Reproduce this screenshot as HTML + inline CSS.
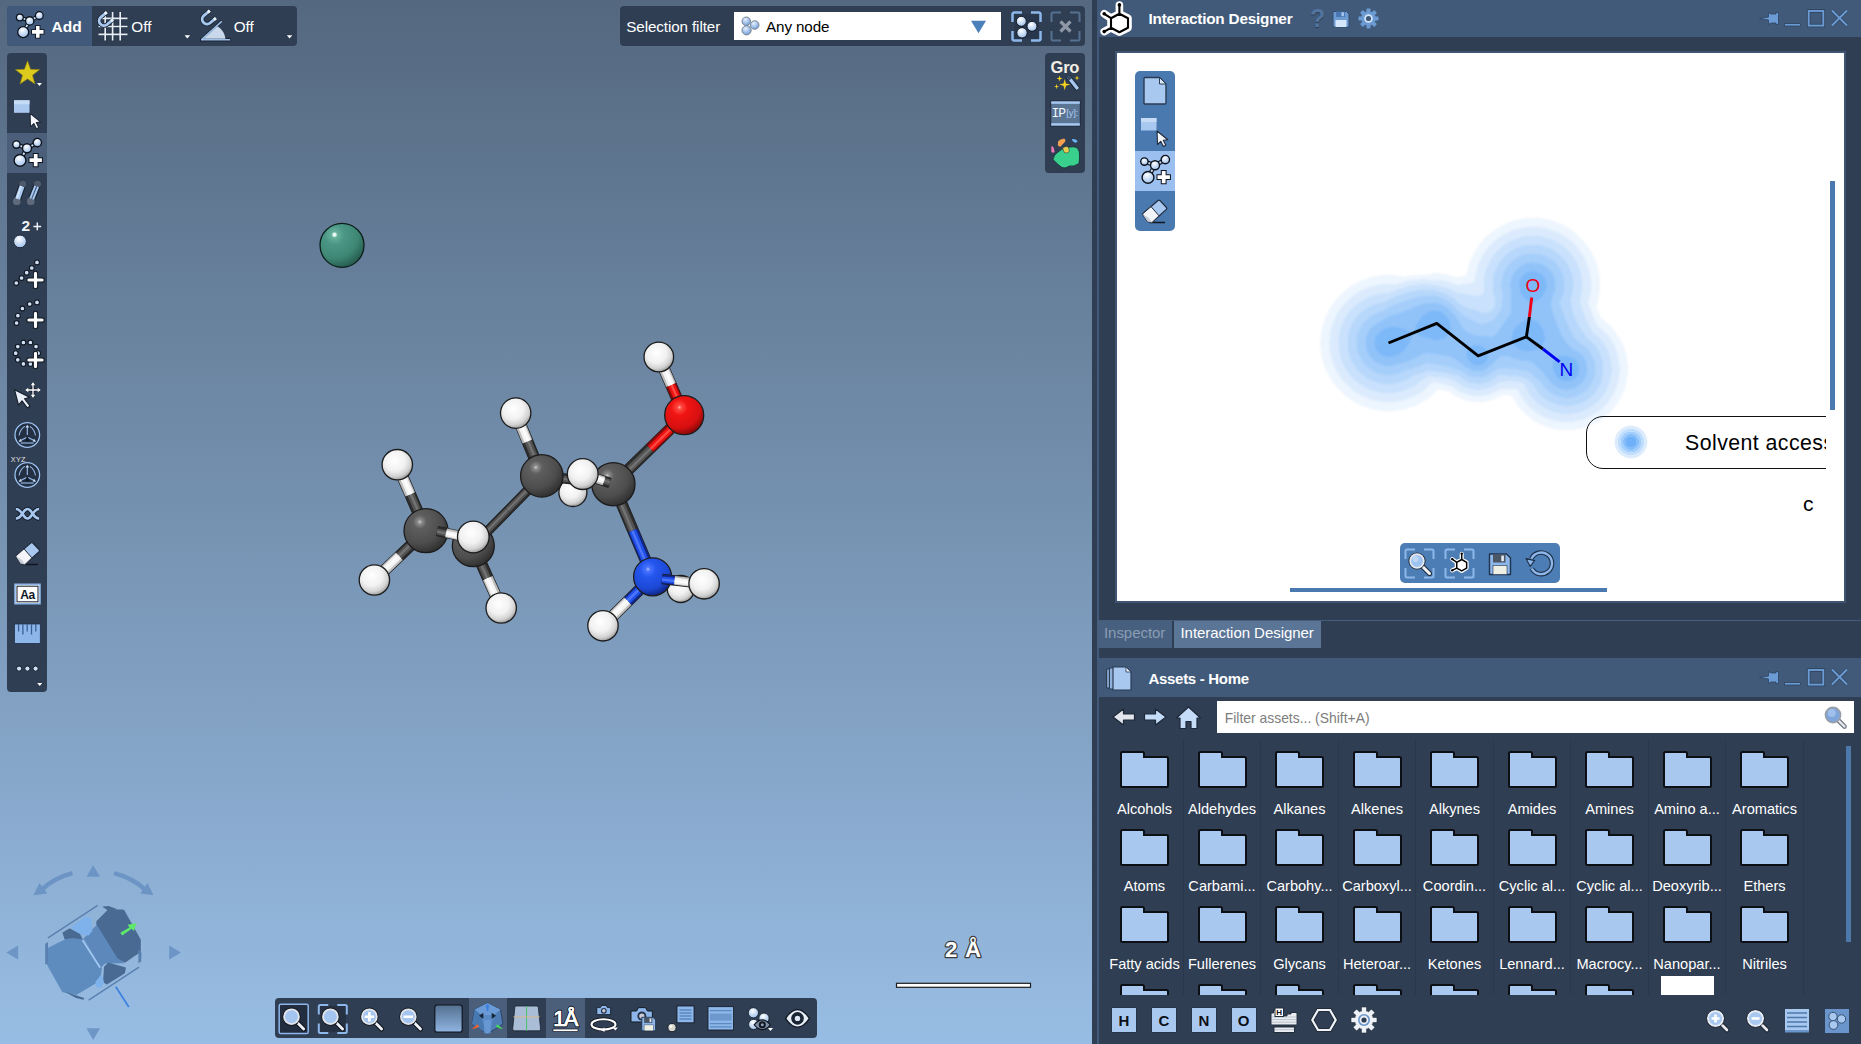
<!DOCTYPE html>
<html><head><meta charset="utf-8"><title>SAMSON</title>
<style>
*{box-sizing:border-box;margin:0;padding:0}
html,body{width:1861px;height:1044px;overflow:hidden;background:#2f3e53;font-family:"Liberation Sans",sans-serif;color:#fff}
.abs{position:absolute}
#vp{position:absolute;left:0;top:0;width:1092px;height:1044px;background:linear-gradient(180deg,#54687f 0%,#98bde4 100%);overflow:hidden}
#sep{position:absolute;left:1092px;top:0;width:6px;height:1044px;background:#2f3e53}
.bar{position:absolute;background:#2f3e53;border-radius:4px}
#rp{position:absolute;left:1098px;top:0;width:763px;height:1044px;background:#2f3e53}
.title{position:absolute;left:-1px;width:764px;height:37px;background:#415a7a}
.title .t{position:absolute;left:51px;top:9.7px;font-weight:bold;font-size:15.3px;letter-spacing:-0.2px;color:#fff;white-space:nowrap}
.tab{font-size:15px;letter-spacing:-0.05px;white-space:nowrap}
.tab span{position:absolute;top:3px}
.lbl{position:absolute;width:100px;text-align:center;font-size:14.6px;color:#fff;white-space:nowrap}
.el{position:absolute;width:24px;height:24px;background:#a8c8f0;color:#0d1117;font-weight:bold;font-size:15px;text-align:center;line-height:25px;box-shadow:0 0 0 1px #26344a}

</style></head>
<body>
<svg width="0" height="0" style="position:absolute">
<defs>
<radialGradient id="ball" cx="42%" cy="30%" r="72%"><stop offset="0" stop-color="#ffffff"/><stop offset="0.4" stop-color="#d6e5f8"/><stop offset="1" stop-color="#9dc0ec"/></radialGradient>
<radialGradient id="ball2" cx="40%" cy="32%" r="70%"><stop offset="0" stop-color="#e8f1fc"/><stop offset="0.5" stop-color="#a9c6ec"/><stop offset="1" stop-color="#6f9bd4"/></radialGradient>
<g id="i-select">
<rect x="2" y="6" width="15.5" height="12.5" fill="#a8c8f0"/><rect x="2" y="6" width="15.5" height="4" fill="#c6dcf6"/>
<path d="M18 19 L18.5 32.5 L21.8 29.3 L24.3 34.5 L26.8 33.3 L24.3 28.3 L28.8 27.8 Z" fill="#f4f6fa" stroke="#1f2a3a" stroke-width="1.1" stroke-linejoin="round"/>
</g>
<g id="i-addmol">
<g stroke="#0e131b" stroke-width="4.2" stroke-linecap="butt"><path d="M6.4 7.6 L17 11.3 M17 11.3 L27.3 5.6 M17 11.3 L10 23.2"/></g>
<g stroke="#c3daf6" stroke-width="2" stroke-linecap="butt"><path d="M6.4 7.6 L17 11.3 M17 11.3 L27.3 5.6 M17 11.3 L10 23.2"/></g>
<g stroke="#0e131b" stroke-width="1.4"><circle cx="6.4" cy="7.6" r="3.7" fill="url(#ball)"/><circle cx="27.3" cy="5.6" r="4.2" fill="url(#ball)"/><circle cx="17" cy="11.3" r="4.5" fill="url(#ball)"/><circle cx="10" cy="23.4" r="5.9" fill="url(#ball)"/></g>
<path d="M25.7 15.9 V30.3 M18.5 23.1 H32.9" stroke="#0e131b" stroke-width="5.8"/>
<path d="M25.7 16.9 V29.3 M19.5 23.1 H31.9" stroke="#fff" stroke-width="3.8"/>
</g>
<g id="i-eraser">
<path d="M11 27.5 H26" stroke="#10161f" stroke-width="1.6"/>
<path d="M3.5 19 L19 5.5 Q20 4.7 21 5.6 L27.5 12.5 Q28.2 13.5 27.3 14.4 L13 27.5 L8.5 26.5 Z" fill="#a8c8f0" stroke="#1f2a3a" stroke-width="1.2" stroke-linejoin="round"/>
<path d="M3.5 19 L12 11.6 L20 20.8 L13 27.5 L8.5 26.5 Z" fill="#f3f5f8" stroke="#1f2a3a" stroke-width="1" stroke-linejoin="round"/>
<path d="M3.5 19 L8.5 26.5 L13 27.5 L10 23 Z" fill="#c9cfd8"/>
</g>
<g id="i-brk">
<path d="M1.5 11 V3 Q1.5 1.5 3 1.5 H11 M20 1.5 H28 Q29.5 1.5 29.5 3 V11 M29.5 20 V28 Q29.5 29.5 28 29.5 H20 M11 29.5 H3 Q1.5 29.5 1.5 28 V20" fill="none" stroke-width="2"/>
</g>
<g id="i-mag">
<path d="M14 14 L22.5 22.5" stroke="#1f2a3a" stroke-width="5.2" stroke-linecap="round"/>
<path d="M14 14 L22.5 22.5" stroke="#eef1f5" stroke-width="3" stroke-linecap="round"/>
<circle cx="10" cy="10" r="8.6" fill="#1f2a3a"/>
<circle cx="10" cy="10" r="7.7" fill="#e6e9ee"/>
<circle cx="10" cy="10" r="6" fill="#9fc3f0"/>
<circle cx="8.5" cy="8" r="3" fill="#c4dbf6" opacity=".8"/>
</g>
<g id="i-hexmol">
<g fill="none" stroke="#fff" stroke-width="6.5" stroke-linecap="round" stroke-linejoin="round"><path d="M21.3 14.5 L29.3 19 L29.3 28.4 L21.3 33 L13.3 28.4 L13.3 19 Z M21.3 14.5 L21.3 5.2 M13.3 19 L6 13.8 M13.3 28.4 L6 32"/></g>
<path d="M21.3 14.5 L29.3 19 L29.3 28.4 L21.3 33 L13.3 28.4 L13.3 19 Z" fill="#fff"/>
<g fill="none" stroke="#000" stroke-width="2.4" stroke-linecap="round" stroke-linejoin="round"><path d="M21.3 14.5 L29.3 19 L29.3 28.4 L21.3 33 L13.3 28.4 L13.3 19 Z M21.3 14.5 L21.3 5.2 M13.3 19 L6 13.8 M13.3 28.4 L6 32"/></g>
<circle cx="21.3" cy="5" r="1.9" fill="#000"/><circle cx="6" cy="13.8" r="1.9" fill="#000"/><circle cx="6" cy="32" r="1.9" fill="#000"/>
</g>
<g id="i-save">
<path d="M1.5 2 H18.5 L22.5 6 V22.5 H1.5 Z" fill="#8db7ea" stroke="#22344d" stroke-width="1.4" stroke-linejoin="round"/>
<rect x="5" y="2.5" width="12.5" height="8" fill="#4c5766"/><rect x="13.3" y="3.6" width="2.6" height="5.6" fill="#e8ecf2"/>
<rect x="5" y="13.5" width="14" height="9" fill="#eef0e6" stroke="#22344d" stroke-width="0.6"/>
</g>
</defs>
</svg>
<div id="vp">
<svg class="abs" style="left:0;top:0" width="1092" height="1044" viewBox="0 0 1092 1044">
<defs>
<radialGradient id="gH" cx="42%" cy="36%" r="62%"><stop offset="0" stop-color="#ffffff"/><stop offset="0.55" stop-color="#f1f1f1"/><stop offset="0.85" stop-color="#d2d2d2"/><stop offset="1" stop-color="#a8a8a8"/></radialGradient>
<radialGradient id="gC" cx="36%" cy="30%" r="70%"><stop offset="0" stop-color="#d0d0d0"/><stop offset="0.07" stop-color="#8c8c8c"/><stop offset="0.22" stop-color="#5e5e5e"/><stop offset="0.7" stop-color="#4d4d4d"/><stop offset="1" stop-color="#333333"/></radialGradient>
<radialGradient id="gO" cx="38%" cy="30%" r="70%"><stop offset="0" stop-color="#ffb0a8"/><stop offset="0.08" stop-color="#ff4a40"/><stop offset="0.3" stop-color="#f01414"/><stop offset="0.75" stop-color="#d81010"/><stop offset="1" stop-color="#8e0808"/></radialGradient>
<radialGradient id="gN" cx="38%" cy="30%" r="70%"><stop offset="0" stop-color="#b0c4ff"/><stop offset="0.08" stop-color="#4a74ff"/><stop offset="0.3" stop-color="#2456ee"/><stop offset="0.75" stop-color="#1c48d4"/><stop offset="1" stop-color="#10288a"/></radialGradient>
<radialGradient id="gG" cx="33%" cy="26%" r="76%"><stop offset="0" stop-color="#ffffff"/><stop offset="0.045" stop-color="#e0f4ee"/><stop offset="0.09" stop-color="#66b09c"/><stop offset="0.3" stop-color="#4a9684"/><stop offset="0.7" stop-color="#3f8775"/><stop offset="1" stop-color="#275f51"/></radialGradient>
</defs>
<circle cx="342" cy="245.3" r="22" fill="url(#gG)" stroke="#0d1f1b" stroke-width="1.3"/>
<g fill="none" stroke-linecap="butt"><circle cx="680.8" cy="589.0" r="13.5" fill="url(#gH)" stroke="#1c1c1c" stroke-width="1.3"/>
<circle cx="572.9" cy="492.5" r="14.0" fill="url(#gH)" stroke="#1c1c1c" stroke-width="1.3"/>
<path d="M473.3 545.7 L501.2 608.0" stroke="#1c1c1c" stroke-width="11.8"/><path d="M473.3 545.7 L487.8 578.1" stroke="#2e2e2e" stroke-width="10.4"/><path d="M472.9 545.9 L487.4 578.3" stroke="#555555" stroke-width="6.9"/><path d="M472.8 545.9 L487.3 578.3" stroke="#7a7a7a" stroke-width="2.3" opacity="0.8"/><path d="M487.8 578.1 L501.2 608.0" stroke="#bdbdbd" stroke-width="10.4"/><path d="M487.4 578.3 L500.8 608.2" stroke="#f2f2f2" stroke-width="6.9"/><path d="M487.3 578.3 L500.7 608.2" stroke="#ffffff" stroke-width="2.3" opacity="0.8"/>
<circle cx="473.3" cy="545.7" r="21.0" fill="url(#gC)" stroke="#1c1c1c" stroke-width="1.3"/>
<circle cx="501.2" cy="608.0" r="15.2" fill="url(#gH)" stroke="#1c1c1c" stroke-width="1.3"/>
<path d="M541.8 475.9 L473.3 545.7" stroke="#1c1c1c" stroke-width="10.0"/><path d="M541.8 475.9 L507.5 510.8" stroke="#2e2e2e" stroke-width="8.6"/><path d="M541.5 475.6 L507.3 510.5" stroke="#555555" stroke-width="5.7"/><path d="M541.4 475.5 L507.1 510.4" stroke="#7a7a7a" stroke-width="1.9" opacity="0.8"/><path d="M507.5 510.8 L473.3 545.7" stroke="#2e2e2e" stroke-width="8.6"/><path d="M507.3 510.5 L473.0 545.4" stroke="#555555" stroke-width="5.7"/><path d="M507.1 510.4 L472.9 545.3" stroke="#7a7a7a" stroke-width="1.9" opacity="0.8"/>
<path d="M426.0 530.7 L397.3 464.7" stroke="#1c1c1c" stroke-width="11.8"/><path d="M426.0 530.7 L410.2 494.4" stroke="#2e2e2e" stroke-width="10.4"/><path d="M426.4 530.5 L410.6 494.2" stroke="#555555" stroke-width="6.9"/><path d="M426.6 530.5 L410.8 494.2" stroke="#7a7a7a" stroke-width="2.3" opacity="0.8"/><path d="M410.2 494.4 L397.3 464.7" stroke="#bdbdbd" stroke-width="10.4"/><path d="M410.6 494.2 L397.7 464.5" stroke="#f2f2f2" stroke-width="6.9"/><path d="M410.8 494.2 L397.9 464.5" stroke="#ffffff" stroke-width="2.3" opacity="0.8"/>
<path d="M426.0 530.7 L374.4 580.0" stroke="#1c1c1c" stroke-width="11.8"/><path d="M426.0 530.7 L399.2 556.3" stroke="#2e2e2e" stroke-width="10.4"/><path d="M425.7 530.4 L398.9 556.0" stroke="#555555" stroke-width="6.9"/><path d="M425.6 530.3 L398.8 555.9" stroke="#7a7a7a" stroke-width="2.3" opacity="0.8"/><path d="M399.2 556.3 L374.4 580.0" stroke="#bdbdbd" stroke-width="10.4"/><path d="M398.9 556.0 L374.1 579.7" stroke="#f2f2f2" stroke-width="6.9"/><path d="M398.8 555.9 L374.0 579.6" stroke="#ffffff" stroke-width="2.3" opacity="0.8"/>
<circle cx="397.3" cy="464.7" r="15.2" fill="url(#gH)" stroke="#1c1c1c" stroke-width="1.3"/>
<circle cx="374.4" cy="580.0" r="15.2" fill="url(#gH)" stroke="#1c1c1c" stroke-width="1.3"/>
<circle cx="426.0" cy="530.7" r="22.0" fill="url(#gC)" stroke="#1c1c1c" stroke-width="1.3"/>
<path d="M437.0 531.0 L463.0 536.5" stroke="#1c1c1c" stroke-width="10.4"/><path d="M437.0 531.0 L446.1 532.9" stroke="#2e2e2e" stroke-width="9.0"/><path d="M436.9 531.4 L446.0 533.3" stroke="#555555" stroke-width="5.9"/><path d="M436.9 531.6 L446.0 533.5" stroke="#7a7a7a" stroke-width="2.0" opacity="0.8"/><path d="M446.1 532.9 L463.0 536.5" stroke="#bdbdbd" stroke-width="9.0"/><path d="M446.0 533.3 L462.9 536.9" stroke="#f2f2f2" stroke-width="5.9"/><path d="M446.0 533.5 L462.9 537.1" stroke="#ffffff" stroke-width="2.0" opacity="0.8"/>
<circle cx="473.3" cy="537.0" r="15.8" fill="url(#gH)" stroke="#1c1c1c" stroke-width="1.3"/>
<path d="M541.8 475.9 L515.7 413.1" stroke="#1c1c1c" stroke-width="11.8"/><path d="M541.8 475.9 L527.4 441.4" stroke="#2e2e2e" stroke-width="10.4"/><path d="M542.2 475.7 L527.8 441.2" stroke="#555555" stroke-width="6.9"/><path d="M542.4 475.7 L528.0 441.1" stroke="#7a7a7a" stroke-width="2.3" opacity="0.8"/><path d="M527.4 441.4 L515.7 413.1" stroke="#bdbdbd" stroke-width="10.4"/><path d="M527.8 441.2 L516.1 412.9" stroke="#f2f2f2" stroke-width="6.9"/><path d="M528.0 441.1 L516.3 412.9" stroke="#ffffff" stroke-width="2.3" opacity="0.8"/>
<circle cx="515.7" cy="413.1" r="15.2" fill="url(#gH)" stroke="#1c1c1c" stroke-width="1.3"/>
<path d="M541.8 475.9 L613.4 484.2" stroke="#1c1c1c" stroke-width="10.4"/><path d="M541.8 475.9 L577.6 480.0" stroke="#2e2e2e" stroke-width="9.0"/><path d="M541.8 476.3 L577.6 480.4" stroke="#555555" stroke-width="5.9"/><path d="M541.7 476.5 L577.5 480.6" stroke="#7a7a7a" stroke-width="2.0" opacity="0.8"/><path d="M577.6 480.0 L613.4 484.2" stroke="#2e2e2e" stroke-width="9.0"/><path d="M577.6 480.4 L613.4 484.6" stroke="#555555" stroke-width="5.9"/><path d="M577.5 480.6 L613.3 484.8" stroke="#7a7a7a" stroke-width="2.0" opacity="0.8"/>
<circle cx="541.8" cy="475.9" r="21.2" fill="url(#gC)" stroke="#1c1c1c" stroke-width="1.3"/>
<path d="M613.4 484.2 L684.2 415.2" stroke="#1c1c1c" stroke-width="11.8"/><path d="M613.4 484.2 L650.2 448.3" stroke="#2e2e2e" stroke-width="10.4"/><path d="M613.7 484.5 L650.5 448.6" stroke="#555555" stroke-width="6.9"/><path d="M613.8 484.6 L650.6 448.7" stroke="#7a7a7a" stroke-width="2.3" opacity="0.8"/><path d="M650.2 448.3 L684.2 415.2" stroke="#8a0a0a" stroke-width="10.4"/><path d="M650.5 448.6 L684.5 415.5" stroke="#ee1212" stroke-width="6.9"/><path d="M650.6 448.7 L684.6 415.6" stroke="#ff5a50" stroke-width="2.3" opacity="0.8"/>
<path d="M684.2 415.2 L658.8 357.0" stroke="#1c1c1c" stroke-width="11.8"/><path d="M684.2 415.2 L671.0 384.9" stroke="#8a0a0a" stroke-width="10.4"/><path d="M684.6 415.0 L671.4 384.8" stroke="#ee1212" stroke-width="6.9"/><path d="M684.7 415.0 L671.5 384.7" stroke="#ff5a50" stroke-width="2.3" opacity="0.8"/><path d="M671.0 384.9 L658.8 357.0" stroke="#bdbdbd" stroke-width="10.4"/><path d="M671.4 384.8 L659.2 356.8" stroke="#f2f2f2" stroke-width="6.9"/><path d="M671.5 384.7 L659.3 356.8" stroke="#ffffff" stroke-width="2.3" opacity="0.8"/>
<path d="M613.4 484.2 L652.6 576.8" stroke="#1c1c1c" stroke-width="11.8"/><path d="M613.4 484.2 L633.0 530.5" stroke="#2e2e2e" stroke-width="10.4"/><path d="M613.0 484.4 L632.6 530.7" stroke="#555555" stroke-width="6.9"/><path d="M612.8 484.4 L632.4 530.7" stroke="#7a7a7a" stroke-width="2.3" opacity="0.8"/><path d="M633.0 530.5 L652.6 576.8" stroke="#10288a" stroke-width="10.4"/><path d="M632.6 530.7 L652.2 577.0" stroke="#2252ea" stroke-width="6.9"/><path d="M632.4 530.7 L652.0 577.0" stroke="#5a80ff" stroke-width="2.3" opacity="0.8"/>
<circle cx="613.4" cy="484.2" r="21.6" fill="url(#gC)" stroke="#1c1c1c" stroke-width="1.3"/>
<path d="M610.0 483.0 L582.7 474.1" stroke="#1c1c1c" stroke-width="10.4"/><path d="M610.0 483.0 L604.0 481.0" stroke="#2e2e2e" stroke-width="9.0"/><path d="M610.1 482.6 L604.1 480.7" stroke="#555555" stroke-width="5.9"/><path d="M610.2 482.4 L604.2 480.5" stroke="#7a7a7a" stroke-width="2.0" opacity="0.8"/><path d="M604.0 481.0 L582.7 474.1" stroke="#bdbdbd" stroke-width="9.0"/><path d="M604.1 480.7 L582.8 473.7" stroke="#f2f2f2" stroke-width="5.9"/><path d="M604.2 480.5 L582.9 473.5" stroke="#ffffff" stroke-width="2.0" opacity="0.8"/>
<circle cx="582.7" cy="474.1" r="15.4" fill="url(#gH)" stroke="#1c1c1c" stroke-width="1.3"/>
<circle cx="658.8" cy="357.0" r="14.8" fill="url(#gH)" stroke="#1c1c1c" stroke-width="1.3"/>
<circle cx="684.2" cy="415.2" r="19.5" fill="url(#gO)" stroke="#1c1c1c" stroke-width="1.3"/>
<path d="M652.6 576.8 L603.0 625.8" stroke="#1c1c1c" stroke-width="11.8"/><path d="M652.6 576.8 L627.8 601.3" stroke="#10288a" stroke-width="10.4"/><path d="M652.3 576.5 L627.5 601.0" stroke="#2252ea" stroke-width="6.9"/><path d="M652.2 576.4 L627.4 600.9" stroke="#5a80ff" stroke-width="2.3" opacity="0.8"/><path d="M627.8 601.3 L603.0 625.8" stroke="#bdbdbd" stroke-width="10.4"/><path d="M627.5 601.0 L602.7 625.5" stroke="#f2f2f2" stroke-width="6.9"/><path d="M627.4 600.9 L602.6 625.4" stroke="#ffffff" stroke-width="2.3" opacity="0.8"/>
<circle cx="603.0" cy="625.8" r="15.2" fill="url(#gH)" stroke="#1c1c1c" stroke-width="1.3"/>
<circle cx="652.6" cy="576.8" r="19.0" fill="url(#gN)" stroke="#1c1c1c" stroke-width="1.3"/>
<path d="M662.0 579.0 L704.1 583.8" stroke="#1c1c1c" stroke-width="10.4"/><path d="M662.0 579.0 L674.6 580.4" stroke="#10288a" stroke-width="9.0"/><path d="M662.0 579.4 L674.6 580.8" stroke="#2252ea" stroke-width="5.9"/><path d="M661.9 579.6 L674.6 581.0" stroke="#5a80ff" stroke-width="2.0" opacity="0.8"/><path d="M674.6 580.4 L704.1 583.8" stroke="#bdbdbd" stroke-width="9.0"/><path d="M674.6 580.8 L704.1 584.2" stroke="#f2f2f2" stroke-width="5.9"/><path d="M674.6 581.0 L704.0 584.4" stroke="#ffffff" stroke-width="2.0" opacity="0.8"/>
<circle cx="704.1" cy="583.8" r="15.2" fill="url(#gH)" stroke="#1c1c1c" stroke-width="1.3"/></g>
<g opacity="0.92">
<polygon points="93.2,865.0 86.5,876.7 100.0,876.7" fill="#6a93c4" />
<polygon points="6.3,952.4 18.1,945.5 18.1,959.6" fill="#6a93c4" />
<polygon points="181.0,952.4 169.2,945.5 169.2,959.6" fill="#6a93c4" />
<polygon points="93.2,1040.0 86.5,1028.2 100.0,1028.2" fill="#6a93c4" />
<polygon points="33.5,895.2 39.4,883.0 47.4,893.4" fill="#6a93c4" />
<polygon points="153.5,895.2 147.5,883.0 140.2,893.4" fill="#6a93c4" />
<path d="M72.4 873.1 Q54 878 42.5 889" stroke="#6a93c4" stroke-width="4.6" fill="none"/>
<path d="M114 873.1 Q132.5 878 144.5 889" stroke="#6a93c4" stroke-width="4.6" fill="none"/>
</g>
<polygon points="97.7,922.0 108.6,911.1 123.0,911.1 139.3,940.0 139.3,950.9 124.9,960.9 115.8,957.2 98.6,931.0" fill="#496a93" stroke="#496a93" stroke-linejoin="round" stroke-width="3"/>
<polygon points="83.6,938.6 96.8,924.7 117.3,958.1 124.9,963.2 105.0,963.6 101.0,967.6" fill="#5c88bc" />
<polygon points="48.9,949.1 72.4,937.3 82.3,940.0 100.4,968.1 98.6,979.9 76.0,993.4 63.3,990.7 48.0,963.6" fill="#5f8cbf" stroke="#5f8cbf" stroke-linejoin="round" stroke-width="3"/>
<polygon points="70.6,927.4 85.0,916.5 91.4,918.3 92.3,931.0 88.7,935.5 79.6,934.6" fill="#7fb2ea" />
<polygon points="63.3,932.8 69.7,929.2 79.6,934.6 81.4,938.6 72.4,937.3 65.1,938.6" fill="#496a93" stroke="#496a93" stroke-width="1.5" stroke-linejoin="round"/>
<polygon points="108.6,963.6 124.9,968.1 124.0,972.6 106.8,983.5 104.0,981.7 105.0,967.2" fill="#496a93" stroke="#496a93" stroke-width="2" stroke-linejoin="round"/>
<polygon points="101.3,974.4 104.0,981.7 101.3,988.0 95.9,987.1 95.5,981.7" fill="#7fb2ea" />
<polygon points="45.2,943.7 48.0,941.9 48.0,963.6 45.2,964.5" fill="#5a80b0" />
<polygon points="138.4,949.1 141.5,952.7 141.2,961.8 138.4,963.0" fill="#5a80b0" />
<polygon points="102.2,906.6 108.6,906.0 117.6,909.3 108.6,911.1" fill="#496a93" />
<polygon points="64.2,991.6 84.1,998.0 83.6,999.8 76.0,998.0" fill="#496a93" />
<path d="M82.6 940.3 L100.2 967.8" stroke="#a4caf4" stroke-width="1.6"/>
<path d="M48 937.9 L97.7 905.3 M88.7 1000.1 L139 967.2" stroke="#5a80b0" stroke-width="1.4" fill="none"/>
<polygon points="120.3,932.8 129.4,927.4 127.6,924.7 136.6,922.9 133.9,931.0 131.7,928.8 122.2,935.5" fill="#60e86c" />
<path d="M115.8 986.7 L128.8 1007" stroke="#3a7fe0" stroke-width="1.6"/>
<rect x="896.5" y="983.3" width="134" height="4" fill="#fff" stroke="#1c1c1c" stroke-width="1.2"/>
<text x="963" y="957.3" font-size="22.3" word-spacing="1.5" font-weight="bold" text-anchor="middle" font-family="Liberation Sans" fill="#fff" stroke="#3a3a3a" stroke-width="2.4" paint-order="stroke" stroke-linejoin="round">2 &#197;</text>
</svg>
<div class="bar" style="left:7px;top:6px;width:290px;height:40px;overflow:hidden"><div class="abs" style="left:0;top:0;width:85px;height:40px;background:#415a7b"></div>
<svg class="abs" style="left:0;top:0" width="290" height="40" viewBox="7 6 290 40">
<g transform="translate(13.9,10.4) scale(0.93)"><use href="#i-addmol"/></g>
<g stroke="#1a2432" stroke-width="3.2" opacity=".55"><path d="M105.2 12 V40.5 M112.6 12 V40.5 M120.2 12 V40.5 M98.5 18.3 H127.5 M98.5 26.5 H127.5 M98.5 34.4 H127.5"/></g>
<g stroke="#e6edf5" stroke-width="1.7"><path d="M105.2 12 V40.5 M112.6 12 V40.5 M120.2 12 V40.5 M98.5 18.3 H127.5 M98.5 26.5 H127.5 M98.5 34.4 H127.5"/></g>
<g transform="translate(104.6,20.3) rotate(50) scale(0.8)"><path d="M-6 -8 V1 A6 6 0 0 0 6 1 V-8" fill="none" stroke="#1a2432" stroke-width="5.6"/><path d="M-6 -8 V1 A6 6 0 0 0 6 1 V-8" fill="none" stroke="#a8c8f0" stroke-width="3.6"/><path d="M-6 -8.6 V-5.4 M6 -8.6 V-5.4" stroke="#eef3f9" stroke-width="3.6"/></g>
<text x="131.3" y="31.9" font-size="15.3" fill="#fff" font-family="Liberation Sans">Off</text>
<polygon points="184.6,35.2 190.1,35.2 187.3,38.4" fill="#fff"/>
<path d="M201 40 L221.8 21.2" stroke="#1a2432" stroke-width="3"/><path d="M200 39.8 H230.5" stroke="#1a2432" stroke-width="3.4"/>
<path d="M203.5 38.8 L217.5 26.3 A 18 18 0 0 1 225.5 38.8 Z" fill="#c9d8ea"/>
<path d="M201.5 39.6 L221.8 21.4" stroke="#9fc0ea" stroke-width="1.5"/><path d="M201 39.8 H230" stroke="#9fc0ea" stroke-width="1.6"/>
<g transform="translate(207.6,18.8) rotate(50) scale(0.8)"><path d="M-6 -8 V1 A6 6 0 0 0 6 1 V-8" fill="none" stroke="#1a2432" stroke-width="5.6"/><path d="M-6 -8 V1 A6 6 0 0 0 6 1 V-8" fill="none" stroke="#a8c8f0" stroke-width="3.6"/><path d="M-6 -8.6 V-5.4 M6 -8.6 V-5.4" stroke="#eef3f9" stroke-width="3.6"/></g>
<text x="233.7" y="31.9" font-size="15.3" fill="#fff" font-family="Liberation Sans">Off</text>
<polygon points="286.8,35.2 292.3,35.2 289.6,38.4" fill="#fff"/>
<text x="51.5" y="31.6" font-size="15.5" font-weight="bold" fill="#fff" font-family="Liberation Sans">Add</text>
</svg></div>
<div class="bar" style="left:7px;top:53px;width:40px;height:639px;overflow:hidden"><div class="abs" style="left:0;top:79.5px;width:40px;height:40px;background:#4b5f7a"></div>
<svg class="abs" style="left:0;top:0" width="40" height="639" viewBox="7 53 40 639">
<polygon points="27.5,60.8 30.6,69.3 39.7,69.6 32.5,75.2 35.0,84.0 27.5,78.9 20.0,84.0 22.5,75.2 15.3,69.6 24.4,69.3" fill="#dcca1c" stroke="#8a7c10" stroke-width="0.6"/>
<polygon points="37.0,83.0 42.0,83.0 39.5,86.0" fill="#fff"/>
<g transform="translate(12,94.3)"><use href="#i-select"/></g>
<g transform="translate(10,137)"><use href="#i-addmol"/></g>
<path d="M16.8 201.2 L22.8 184.0" stroke="#1a2432" stroke-width="7.4" stroke-linecap="round"/><circle cx="16.8" cy="201.2" r="3.9" fill="#5e6a7c"/><circle cx="22.8" cy="184.0" r="3.6" fill="#4e596b"/><path d="M17.6 198.8 L22.0 186.4" stroke="#a8c8f0" stroke-width="5"/><path d="M16.8 198.5 L21.2 186.1" stroke="#d6e6fa" stroke-width="1.6"/>
<path d="M30.8 201.2 L37.6 184.0" stroke="#1a2432" stroke-width="7.4" stroke-linecap="round"/><circle cx="30.8" cy="201.2" r="3.9" fill="#5e6a7c"/><circle cx="37.6" cy="184.0" r="3.6" fill="#4e596b"/><path d="M31.7 198.9 L36.7 186.3" stroke="#a8c8f0" stroke-width="5"/><path d="M31.7 198.9 L36.7 186.3" stroke="#3d5578" stroke-width="1.1"/>
<text x="21.6" y="231" font-size="15.5" font-weight="bold" fill="#eef3f9" font-family="Liberation Sans">2</text>
<path d="M33.4 226.4 H41.2 M37.3 222.5 V230.3" stroke="#eef3f9" stroke-width="1.5"/>
<circle cx="20" cy="241.4" r="6.4" fill="url(#ball)" stroke="#1a2432" stroke-width="1"/>
<circle cx="16.3" cy="283.0" r="2.4" fill="#cfe0f6" stroke="#10161f" stroke-width="1.1"/><circle cx="21.6" cy="278.0" r="2.4" fill="#cfe0f6" stroke="#10161f" stroke-width="1.1"/><circle cx="26.7" cy="272.7" r="2.4" fill="#cfe0f6" stroke="#10161f" stroke-width="1.1"/><circle cx="31.8" cy="268.0" r="2.4" fill="#cfe0f6" stroke="#10161f" stroke-width="1.1"/><circle cx="37.0" cy="262.4" r="2.4" fill="#cfe0f6" stroke="#10161f" stroke-width="1.1"/>
<path d="M35.5 273.4 V286.6 M28.9 280.0 H42.1" stroke="#10161f" stroke-width="5.2" stroke-linecap="round"/><path d="M35.5 273.4 V286.6 M28.9 280.0 H42.1" stroke="#fff" stroke-width="3.2" stroke-linecap="round"/>
<circle cx="16.6" cy="323.0" r="2.4" fill="#cfe0f6" stroke="#10161f" stroke-width="1.1"/><circle cx="17.9" cy="315.7" r="2.4" fill="#cfe0f6" stroke="#10161f" stroke-width="1.1"/><circle cx="22.4" cy="308.5" r="2.4" fill="#cfe0f6" stroke="#10161f" stroke-width="1.1"/><circle cx="29.7" cy="304.0" r="2.4" fill="#cfe0f6" stroke="#10161f" stroke-width="1.1"/><circle cx="37.0" cy="302.4" r="2.4" fill="#cfe0f6" stroke="#10161f" stroke-width="1.1"/>
<path d="M35.5 313.4 V326.6 M28.9 320.0 H42.1" stroke="#10161f" stroke-width="5.2" stroke-linecap="round"/><path d="M35.5 313.4 V326.6 M28.9 320.0 H42.1" stroke="#fff" stroke-width="3.2" stroke-linecap="round"/>
<circle cx="23.4" cy="342.5" r="2.4" fill="#cfe0f6" stroke="#10161f" stroke-width="1.1"/><circle cx="30.4" cy="342.5" r="2.4" fill="#cfe0f6" stroke="#10161f" stroke-width="1.1"/><circle cx="36.0" cy="346.6" r="2.4" fill="#cfe0f6" stroke="#10161f" stroke-width="1.1"/><circle cx="38.1" cy="353.2" r="2.4" fill="#cfe0f6" stroke="#10161f" stroke-width="1.1"/><circle cx="36.0" cy="359.8" r="2.4" fill="#cfe0f6" stroke="#10161f" stroke-width="1.1"/><circle cx="30.4" cy="363.9" r="2.4" fill="#cfe0f6" stroke="#10161f" stroke-width="1.1"/><circle cx="23.4" cy="363.9" r="2.4" fill="#cfe0f6" stroke="#10161f" stroke-width="1.1"/><circle cx="17.8" cy="359.8" r="2.4" fill="#cfe0f6" stroke="#10161f" stroke-width="1.1"/><circle cx="15.7" cy="353.2" r="2.4" fill="#cfe0f6" stroke="#10161f" stroke-width="1.1"/><circle cx="17.8" cy="346.6" r="2.4" fill="#cfe0f6" stroke="#10161f" stroke-width="1.1"/>
<path d="M35.5 353.4 V366.6 M28.9 360.0 H42.1" stroke="#10161f" stroke-width="5.2" stroke-linecap="round"/><path d="M35.5 353.4 V366.6 M28.9 360.0 H42.1" stroke="#fff" stroke-width="3.2" stroke-linecap="round"/>
<path d="M14.5 389.7 L18.5 405 L22 400.8 L27.5 408 L30 406 L24.6 398.8 L29.6 397.3 Z" fill="#e9eff7" stroke="#141c28" stroke-width="1.1" stroke-linejoin="round"/>
<g stroke="#141c28" stroke-width="3"><path d="M26.5 390 H39.5 M33 383.5 V396.5"/></g><g stroke="#fff" stroke-width="1.3"><path d="M26.5 390 H39.5 M33 383.5 V396.5"/></g>
<g fill="#fff"><polygon points="33,382.3 30.8,385.3 35.2,385.3"/><polygon points="33,397.7 30.8,394.7 35.2,394.7"/><polygon points="25.3,390 28.3,387.8 28.3,392.2"/><polygon points="40.7,390 37.7,387.8 37.7,392.2"/></g>
<circle cx="27.3" cy="435.0" r="12.3" fill="#233044" stroke="#9cc0ee" stroke-width="1.3"/><g stroke="#9cc0ee" stroke-width="1.1" fill="none"><path d="M27.3 435.0 v-9"/><path d="M26.5 437.4 l-7 3.6"/><path d="M28.1 437.4 l7 3.6"/><path d="M20.8 443.0 h13"/><path d="M24.7 426.4 q-4.5 3 -5.6 9"/><path d="M29.9 426.4 q4.5 3 5.6 9"/></g><g fill="#cfe0f6"><polygon points="27.3,424.8 25.5,427.6 29.1,427.6"/><polygon points="18.7,441.8 21.9,441.6 20.5,438.8"/><polygon points="35.9,441.8 32.7,441.6 34.1,438.8"/></g><polygon points="27.3,436.0 24.9,441.4 29.7,441.4" fill="#141c28"/>
<circle cx="27.3" cy="475.0" r="12.3" fill="#233044" stroke="#9cc0ee" stroke-width="1.3"/><g stroke="#9cc0ee" stroke-width="1.1" fill="none"><path d="M27.3 475.0 v-9"/><path d="M26.5 477.4 l-7 3.6"/><path d="M28.1 477.4 l7 3.6"/><path d="M20.8 483.0 h13"/><path d="M24.7 466.4 q-4.5 3 -5.6 9"/><path d="M29.9 466.4 q4.5 3 5.6 9"/></g><g fill="#cfe0f6"><polygon points="27.3,464.8 25.5,467.6 29.1,467.6"/><polygon points="18.7,481.8 21.9,481.6 20.5,478.8"/><polygon points="35.9,481.8 32.7,481.6 34.1,478.8"/></g><polygon points="27.3,476.0 24.9,481.4 29.7,481.4" fill="#141c28"/>
<text x="10.7" y="462" font-size="7.2" fill="#e2e2e2" font-family="Liberation Sans" letter-spacing="0.4">XYZ</text>
<g fill="none" stroke="#141c28" stroke-width="4.6"><path d="M16 509 C22 509 23 518.5 27.5 518.5 S33 509 39 509"/><path d="M16 518.5 C22 518.5 23 509 27.5 509 S33 518.5 39 518.5"/></g>
<g fill="none" stroke="#a8c8f0" stroke-width="2.7"><path d="M16 509 C22 509 23 518.5 27.5 518.5 S33 509 39 509"/><path d="M16 518.5 C22 518.5 23 509 27.5 509 S33 518.5 39 518.5"/></g>
<g transform="translate(12.3,537.5) scale(0.98)"><use href="#i-eraser"/></g>
<rect x="15" y="584.3" width="25" height="19.4" fill="#fff" stroke="#8db7ea" stroke-width="1.6"/><rect x="17" y="586.2" width="21" height="15.6" fill="none" stroke="#141c28" stroke-width="1"/>
<text x="27.5" y="599.3" font-size="12" font-weight="bold" text-anchor="middle" fill="#10161f" font-family="Liberation Sans" letter-spacing="-0.3">Aa</text>
<rect x="14.5" y="624" width="25.8" height="19.4" fill="#8db7ea" stroke="#223049" stroke-width="0.8"/>
<g stroke="#3b5f92" stroke-width="1.3"><path d="M18.6 624 v7.5 M22.9 624 v10.5 M27.2 624 v7.5 M31.5 624 v10.5 M35.8 624 v7.5"/></g>
<g fill="#cfe0f6" stroke="#141c28" stroke-width="1"><circle cx="19.1" cy="668.6" r="2.6"/><circle cx="27.4" cy="668.6" r="2.6"/><circle cx="35.6" cy="668.6" r="2.6"/></g>
<polygon points="37.2,683.0 42.2,683.0 39.7,686.0" fill="#fff"/>
</svg></div>
<div class="bar" style="left:620px;top:6px;width:465px;height:40px"><div class="abs" style="left:6.3px;top:11.7px;font-size:15.2px;letter-spacing:-0.1px;white-space:nowrap" id="t-sel">Selection filter</div>
<div class="abs" style="left:114px;top:6px;width:267px;height:28px;background:#fff"><div class="abs" style="left:32px;top:5.7px;font-size:15.2px;letter-spacing:-0.1px;color:#000;white-space:nowrap" id="t-any">Any node</div>
<svg class="abs" style="left:5px;top:3px" width="24" height="22" viewBox="0 0 24 22"><g stroke="#7e8794" stroke-width="1"><circle cx="7.3" cy="6.3" r="4.3" fill="url(#ball2)"/><circle cx="15.7" cy="10" r="4.3" fill="url(#ball2)"/><circle cx="7.6" cy="15.3" r="4.6" fill="url(#ball2)"/></g></svg>
<svg class="abs" style="left:236px;top:8px" width="17" height="14" viewBox="0 0 17 14"><polygon points="1,0.8 16,0.8 8.5,13.2" fill="#4c80ba"/></svg></div>
<svg class="abs" style="left:391px;top:5px" width="31" height="31" viewBox="0 0 31 31"><use href="#i-brk" stroke="#8db7ea"/><rect x="3.2" y="3.2" width="24.6" height="24.6" fill="#26334a" opacity=".6"/><use href="#i-brk" stroke="#8db7ea"/><g stroke="#10161f" stroke-width="1"><circle cx="10.3" cy="10.3" r="5" fill="url(#ball)"/><circle cx="21" cy="15.3" r="5" fill="url(#ball)"/><circle cx="11" cy="21.8" r="5.2" fill="url(#ball)"/></g></svg>
<svg class="abs" style="left:430px;top:5px" width="31" height="31" viewBox="0 0 31 31"><use href="#i-brk" stroke="#56708f"/><path d="M10.5 10.5 L20.5 20.5 M20.5 10.5 L10.5 20.5" stroke="#8d97a5" stroke-width="3.2"/></svg>
</div>
<div class="bar" style="left:1045px;top:53px;width:40px;height:120px">
<div class="abs" style="left:5.5px;top:5px;font-size:16.5px;font-weight:bold;color:#f1ede4;letter-spacing:-0.2px" id="t-gro">Gro</div>
<svg class="abs" style="left:0;top:0" width="40" height="120" viewBox="1045 53 40 120">
<polygon points="1064.7,79.0 1065.9,83.4 1070.3,84.6 1065.9,85.8 1064.7,90.2 1063.5,85.8 1059.1,84.6 1063.5,83.4" fill="#f5d21c"/><polygon points="1059.6,75.5 1060.3,77.8 1062.6,78.5 1060.3,79.2 1059.6,81.5 1058.9,79.2 1056.6,78.5 1058.9,77.8" fill="#f5d21c"/><polygon points="1056.6,83.7 1057.2,85.9 1059.4,86.5 1057.2,87.1 1056.6,89.3 1056.0,87.1 1053.8,86.5 1056.0,85.9" fill="#f5d21c"/><polygon points="1077.0,75.4 1077.6,77.4 1079.6,78.0 1077.6,78.6 1077.0,80.6 1076.4,78.6 1074.4,78.0 1076.4,77.4" fill="#f5d21c"/>
<path d="M1068 76.5 L1078 89.3" stroke="#1a2432" stroke-width="5.2"/><path d="M1068.2 76.8 L1077.8 89" stroke="#a8c8f0" stroke-width="3.4"/><path d="M1068.2 76.8 L1070.3 79.5" stroke="#33465f" stroke-width="3.4"/>
<rect x="1050.8" y="101" width="29.4" height="25" fill="#5a7494" stroke="#1a2432" stroke-width="0.8"/><rect x="1051.2" y="101.4" width="28.6" height="2.4" fill="#a8c8f0"/><rect x="1051.2" y="123.2" width="28.6" height="2.4" fill="#a8c8f0"/>
<text x="1051.6" y="117" font-size="13" fill="#f4f6fa" font-family="Liberation Mono" letter-spacing="-1.2">IP</text><text x="1066.2" y="116.4" font-size="9.5" fill="#a8c8f0" font-family="Liberation Sans" letter-spacing="-0.2">[y]:</text>
<path d="M1058 152 Q1064 146.5 1070 147 Q1078 145.5 1079.3 152 Q1080 158 1079 163.5 Q1074 167 1069.5 166 Q1064 169.5 1060.5 166.5 Q1056 163 1053 159.5 Q1053.5 155 1058 152 Z" fill="#38d08c" stroke="#1a2432" stroke-width="0.8"/>
<path d="M1058.2 141.3 Q1061 138 1064.5 138.8 Q1066.3 140 1064.5 142.5 Q1062 144.5 1061 146.5 Q1058.5 147 1057.8 145 Z" fill="#f5a050"/>
<path d="M1051.3 146.5 Q1052.8 145.8 1053.8 148 L1054.6 152 Q1053 153.6 1051.4 152 Z" fill="#f078b4"/>
<path d="M1072 139 Q1076 138.6 1077.6 141 Q1077 143 1074.5 142.6 Q1072 141.8 1072 139 Z" fill="#6ab4f5"/>
<path d="M1062.5 148 Q1065.5 145.5 1068.5 147 L1069.3 151.5 Q1067 154 1064.3 152.5 Z" fill="#e8cc50" stroke="#1a2432" stroke-width="0.5"/>
</svg></div>
<div class="bar" style="left:275px;top:998px;width:542px;height:40px;overflow:hidden">
<div class="abs" style="left:194px;top:0;width:38px;height:40px;background:#4b5f7a"></div><div class="abs" style="left:271px;top:0;width:39px;height:40px;background:#4b5f7a"></div>
<svg class="abs" style="left:0;top:0" width="542" height="40" viewBox="275 998 542 40">
<rect x="279.2" y="1004.2" width="29" height="29.4" rx="1.6" fill="#222d3f" stroke="#8db7ea" stroke-width="1.5"/>
<path d="M296.5 1021.7 L303.7 1029.0" stroke="#10161f" stroke-width="5" stroke-linecap="round"/><path d="M296.5 1021.7 L303.7 1029.0" stroke="#eef1f5" stroke-width="2.8" stroke-linecap="round"/><circle cx="291.5" cy="1016.7" r="9.1" fill="#10161f"/><circle cx="291.5" cy="1016.7" r="8.3" fill="#e4e6ea"/><circle cx="291.5" cy="1016.7" r="6.5" fill="#a4c5f0"/>
<g transform="translate(317.3,1003.4)"><rect x="2.5" y="2.5" width="26" height="26" fill="#222d3f" opacity=".7"/><use href="#i-brk" stroke="#8db7ea"/></g>
<path d="M335.4 1021.7 L342.6 1029.0" stroke="#10161f" stroke-width="5" stroke-linecap="round"/><path d="M335.4 1021.7 L342.6 1029.0" stroke="#eef1f5" stroke-width="2.8" stroke-linecap="round"/><circle cx="330.4" cy="1016.7" r="9.1" fill="#10161f"/><circle cx="330.4" cy="1016.7" r="8.3" fill="#e4e6ea"/><circle cx="330.4" cy="1016.7" r="6.5" fill="#a4c5f0"/>
<path d="M374.4 1021.7 L381.6 1029.0" stroke="#10161f" stroke-width="5" stroke-linecap="round"/><path d="M374.4 1021.7 L381.6 1029.0" stroke="#eef1f5" stroke-width="2.8" stroke-linecap="round"/><circle cx="369.4" cy="1016.7" r="9.1" fill="#10161f"/><circle cx="369.4" cy="1016.7" r="8.3" fill="#e4e6ea"/><circle cx="369.4" cy="1016.7" r="6.5" fill="#a4c5f0"/><path d="M364.6 1016.7 H374.2 M369.4 1011.9 V1021.5" stroke="#fff" stroke-width="2.6"/>
<path d="M413.3 1021.7 L420.5 1029.0" stroke="#10161f" stroke-width="5" stroke-linecap="round"/><path d="M413.3 1021.7 L420.5 1029.0" stroke="#eef1f5" stroke-width="2.8" stroke-linecap="round"/><circle cx="408.3" cy="1016.7" r="9.1" fill="#10161f"/><circle cx="408.3" cy="1016.7" r="8.3" fill="#e4e6ea"/><circle cx="408.3" cy="1016.7" r="6.5" fill="#a4c5f0"/><path d="M403.5 1016.7 H413.1" stroke="#fff" stroke-width="2.6"/>
<defs><linearGradient id="bgG" x1="0" y1="0" x2="0" y2="1"><stop offset="0" stop-color="#54708f"/><stop offset="1" stop-color="#8fb5e2"/></linearGradient></defs>
<rect x="434.8" y="1005" width="27.4" height="27.2" rx="2.5" fill="url(#bgG)" stroke="#10161f" stroke-width="1.2"/>
<polygon points="487.5,1003 500.5,1009.5 503,1024 487.5,1034 472,1024 474.5,1009.5" fill="#4f7db6" stroke="#2b4468" stroke-width="1" stroke-linejoin="round"/>
<polygon points="487.5,1003 500.5,1009.5 494,1015 481,1015 474.5,1009.5" fill="#6a9bd6"/>
<polygon points="481,1015 494,1015 492,1024 487.5,1034 483,1024" fill="#5b8bc6"/>
<polygon points="474.5,1009.5 481,1015 483,1024 487.5,1034 472,1024" fill="#4878b0"/>
<polygon points="484.2,1020 490.8,1020 490.8,1033 487.5,1034 484.2,1033" fill="#6a9bd6" opacity=".8"/>
<path d="M487.5 1005.5 V1011" stroke="#3a7fe0" stroke-width="1.8"/><polygon points="487.5,1003.8 485.3,1007.2 489.7,1007.2" fill="#3a7fe0"/>
<polygon points="479,1015.8 483.3,1012.8 483.3,1018.8" fill="#1a2636"/><polygon points="496,1015.8 491.7,1012.8 491.7,1018.8" fill="#1a2636"/>
<polygon points="472,1029 477.6,1024.2 479.2,1026.8 475,1028.6" fill="#f06030"/><polygon points="503,1029 497.4,1024.2 495.8,1026.8 500,1028.6" fill="#48d860"/>
<path d="M516 1006 H537 Q538 1006 538.3 1007.5 L540.6 1029 Q540.8 1030.8 539 1030.8 H514.3 Q512.5 1030.8 512.7 1029 L514.8 1007.5 Q515 1006 516 1006 Z" fill="#a9bdd6" stroke="#1a2432" stroke-width="0.8"/>
<path d="M526.6 1006 V1030.8" stroke="#4cc070" stroke-width="1"/><path d="M513.5 1016.9 H539.6" stroke="#d8b890" stroke-width="1"/>
<text x="565.3" y="1026.2" font-size="21.5" text-anchor="middle" fill="#fff" font-family="Liberation Sans" stroke="#10161f" stroke-width="2.4" paint-order="stroke" letter-spacing="-1">1&#197;</text>
<text x="565.3" y="1026.2" font-size="21.5" text-anchor="middle" fill="#fff" font-family="Liberation Sans" stroke="#fff" stroke-width="0.7" letter-spacing="-1">1&#197;</text>
<rect x="553" y="1029" width="25" height="2.6" fill="#fff" stroke="#10161f" stroke-width="0.7"/>
<g transform="translate(596.8,1004.6) scale(1.0)"><path d="M0 3 H3.6 L4.8 0.8 H9.4 L10.6 3 H13.8 V10 H0 Z" fill="#8db7ea" stroke="#10161f" stroke-width="0.8"/><circle cx="7" cy="6.2" r="2.9" fill="#26334a"/><circle cx="7" cy="6.2" r="1.7" fill="#c8ccd4"/></g>
<ellipse cx="603.5" cy="1024.4" rx="12" ry="5.2" fill="none" stroke="#10161f" stroke-width="3.8"/><ellipse cx="603.5" cy="1024.4" rx="12" ry="5.2" fill="none" stroke="#fff" stroke-width="2.1"/>
<polygon points="600.5,1029.7 604.5,1027.5 604.5,1031.9" fill="#fff"/>
<polygon points="612.8,1027.6 617.8,1027.6 615.3,1030.6" fill="#fff"/>
<g transform="translate(631,1006.4) scale(1.55)"><path d="M0 3 H3.6 L4.8 0.8 H9.4 L10.6 3 H13.8 V10 H0 Z" fill="#8db7ea" stroke="#10161f" stroke-width="0.6"/><circle cx="7" cy="6.2" r="2.9" fill="#26334a"/><circle cx="7" cy="6.2" r="1.7" fill="#c8ccd4"/></g>
<g transform="translate(640.8,1016) scale(0.66)"><use href="#i-save"/></g>
<rect x="677" y="1006" width="17" height="16.8" fill="#8db7ea" stroke="#10161f" stroke-width="0.8"/><g stroke="#5a88c0" stroke-width="1.3"><path d="M679.5 1010 H691.5 M679.5 1013 H691.5 M679.5 1016 H691.5 M679.5 1019 H691.5"/></g>
<circle cx="672" cy="1027.6" r="4.1" fill="#d8d8d0" stroke="#10161f" stroke-width="0.9"/><circle cx="670.8" cy="1026.4" r="1.6" fill="#f4f4f0"/>
<rect x="708" y="1006.7" width="25.6" height="23.3" fill="#8db7ea" stroke="#10161f" stroke-width="0.8"/><rect x="710" y="1013.6" width="21.6" height="7" fill="#6c98ce"/><g stroke="#5a88c0" stroke-width="1.3"><path d="M710 1010.6 H731.6 M710 1023.6 H731.6 M710 1026.8 H731.6"/></g>
<g stroke="#10161f" stroke-width="0.8"><circle cx="753.4" cy="1012.8" r="5.1" fill="url(#ball)"/><circle cx="764" cy="1018.2" r="5.1" fill="url(#ball)"/><circle cx="753.7" cy="1024.4" r="5.1" fill="url(#ball)"/></g>
<path d="M754.2 1024.8 Q762.3 1015 770.4 1024.8 Q762.3 1034.4 754.2 1024.8 Z" fill="#7d8ea6" stroke="#10161f" stroke-width="1.1"/><circle cx="762.3" cy="1024.8" r="3.5" fill="#10161f"/><circle cx="762.3" cy="1024.8" r="1.5" fill="#8ea0ba"/>
<polygon points="768.0,1028.0 773.0,1028.0 770.5,1031.0" fill="#fff"/>
<path d="M784.8 1018.4 Q797.5 999.6 810.2 1018.4 Q797.5 1037 784.8 1018.4 Z" fill="#10161f"/><path d="M786.4 1018.4 Q797.5 1002.2 808.6 1018.4 Q797.5 1034.4 786.4 1018.4 Z" fill="#e6edf6"/><circle cx="797.5" cy="1018.4" r="6.3" fill="#1a2432"/><circle cx="797.5" cy="1018.4" r="2.7" fill="#dfe9f6"/>
</svg></div>
</div>
<div id="sep"></div>
<div id="rp">
<div class="abs" style="left:-1px;top:0;width:2px;height:1044px;background:#415a7a"></div>
<div class="title" style="top:0"><div class="t" style="left:51.5px">Interaction Designer</div>
<svg class="abs" style="left:3px;top:0" width="36" height="37" viewBox="0 0 36 37">
<g fill="none" stroke="#fff" stroke-width="7.6" stroke-linecap="round" stroke-linejoin="round"><path d="M19.4 13.8 L28 18.2 L28 27.8 L19.4 32.2 L11 27.8 L11 18.2 Z M19.4 13.8 L19.4 5 M11 18.2 L4.2 13.8 M11 27.8 L4.2 31.6"/></g>
<path d="M19.4 13.8 L28 18.2 L28 27.8 L19.4 32.2 L11 27.8 L11 18.2 Z" fill="#fff"/>
<g fill="none" stroke="#000" stroke-width="2.1" stroke-linecap="round" stroke-linejoin="round"><path d="M19.4 13.8 L28 18.2 L28 27.8 L19.4 32.2 L11 27.8 L11 18.2 Z M19.4 13.8 L19.4 5 M11 18.2 L4.2 13.8 M11 27.8 L4.2 31.6"/></g>
<circle cx="19.4" cy="4.9" r="1.8" fill="#000"/><circle cx="4.2" cy="13.8" r="1.8" fill="#000"/><circle cx="4.2" cy="31.6" r="1.8" fill="#000"/>
</svg>
<div class="abs" style="left:213px;top:4px;font-size:25px;font-weight:bold;color:#52749f;text-shadow:0 1px 1px #2b3b52">?</div>
<svg class="abs" style="left:235px;top:10px" width="18" height="18" viewBox="0 0 18 18"><path d="M1 1.5 H14.5 L17 4 V17 H1 Z" fill="#6c9bd3" stroke="#33496a" stroke-width="1"/><rect x="4" y="1.5" width="9" height="5.5" fill="#4a78b2"/><rect x="9.5" y="2.2" width="2.4" height="4" fill="#a8c8f0"/><rect x="3.5" y="10" width="11" height="7" fill="#d5e6fb"/></svg>
<svg class="abs" style="left:261px;top:8px" width="21" height="21" viewBox="-10.5 -10.5 21 21"><g fill="#6c9bd3"><circle r="7.2"/><g id="gt"><rect x="-2" y="-10" width="4" height="20" rx="0.8"/></g><use href="#gt" transform="rotate(45)"/><use href="#gt" transform="rotate(90)"/><use href="#gt" transform="rotate(135)"/></g><circle r="4.3" fill="#d5e6fb"/><circle r="2.6" fill="#415a7a"/></svg>
<svg class="abs" style="left:661px;top:8px" width="92" height="22" viewBox="0 0 92 22">
<g fill="#6a9bd4" stroke="#2f425e" stroke-width="0.8"><path d="M1.5 10.5 L10.5 9 L10.5 4.5 L13 6 L18 6 L18 4.5 L20.5 4.5 L20.5 16.5 L18 16.5 L18 15 L13 15 L10.5 16.5 L10.5 12 Z"/>
<rect x="26.5" y="15.6" width="16" height="2.4"/></g>
<rect x="50.7" y="3" width="14.6" height="14.6" fill="none" stroke="#2f425e" stroke-width="3.6"/>
<rect x="50.7" y="3" width="14.6" height="14.6" fill="none" stroke="#6a9bd4" stroke-width="1.9"/>
<path d="M74 2.5 L89 17.5 M89 2.5 L74 17.5" stroke="#2f425e" stroke-width="3.4" fill="none"/>
<path d="M74 2.5 L89 17.5 M89 2.5 L74 17.5" stroke="#6a9bd4" stroke-width="2" fill="none"/>
</svg>
</div>
<div class="abs" style="left:17px;top:51px;width:731px;height:552px;background:#3f5573"></div>
<div id="cv" class="abs" style="left:19px;top:53px;width:727px;height:548px;background:#fff;overflow:hidden"><svg class="abs" style="left:0;top:0" width="727" height="548" viewBox="0 0 727 548">
<defs><radialGradient id="gl"><stop offset="0" stop-color="#4a9cf5" stop-opacity="1"/><stop offset="0.12" stop-color="#4a9cf5" stop-opacity="0.94"/><stop offset="1" stop-color="#4a9cf5" stop-opacity="0"/></radialGradient><filter id="post" x="0" y="0" width="727" height="548" filterUnits="userSpaceOnUse" color-interpolation-filters="sRGB"><feComponentTransfer><feFuncA type="discrete" tableValues="0 0.10 0.20 0.30 0.40 0.50 0.61 0.72"/></feComponentTransfer><feGaussianBlur stdDeviation="0.9"/></filter></defs>
<g filter="url(#post)">
<circle cx="271.5" cy="290.0" r="77.0" fill="url(#gl)"/>
<circle cx="319.8" cy="270.4" r="56.6" fill="url(#gl)"/>
<circle cx="361.2" cy="302.9" r="52.1" fill="url(#gl)"/>
<circle cx="409.4" cy="283.8" r="47.6" fill="url(#gl)"/>
<circle cx="415.9" cy="232.0" r="75.9" fill="url(#gl)"/>
<circle cx="449.7" cy="316.0" r="69.1" fill="url(#gl)"/>
</g>
<path d="M271.5 290.0 L319.8 270.4 L361.2 302.9 L409.4 283.8" stroke="#000" stroke-width="2.9" fill="none" stroke-linejoin="round"/>
<path d="M409.4 283.8 L412.4 263.8" stroke="#000" stroke-width="2.9" stroke-linecap="butt" fill="none"/>
<path d="M412.4 263.8 L414.7 244.5" stroke="#f00014" stroke-width="2.9" stroke-linecap="butt" fill="none"/>
<path d="M409.4 283.8 L426.0 296.0" stroke="#000" stroke-width="2.9" stroke-linecap="butt" fill="none"/>
<path d="M426.0 296.0 L442.6 308.8" stroke="#0000f0" stroke-width="2.9" stroke-linecap="butt" fill="none"/>
<text x="415.9" y="238.8" font-size="19" fill="#f00014" text-anchor="middle" font-family="Liberation Sans">O</text>
<text x="449.3" y="322.8" font-size="19" fill="#0000f0" text-anchor="middle" font-family="Liberation Sans">N</text>
</svg>
<div class="abs" style="left:468px;top:361px;width:241px;height:60px;overflow:hidden">
<div class="abs" style="left:1px;top:2px;width:300px;height:53px;border:1.8px solid #111;border-radius:17px"></div>
<div class="abs" style="left:29px;top:11px;width:34px;height:34px;border-radius:50%;background:radial-gradient(circle closest-side,#6fb0f8 0%,#6fb0f8 30%,#86bef9 31%,#86bef9 45%,#a3cefb 46%,#a3cefb 60%,#bfddfc 61%,#bfddfc 76%,#dcecfd 77%,#dcecfd 92%,rgba(255,255,255,0) 100%);filter:blur(0.6px)"></div>
<div class="abs" style="left:100px;top:17px;font-size:21.3px;color:#000;white-space:nowrap;letter-spacing:0.45px">Solvent accessible</div>
</div>
<div class="abs" style="left:686px;top:439px;font-size:21px;color:#000">c</div>
<div class="abs" style="left:713px;top:128px;width:5px;height:229px;background:#4a79b0"></div>
<div class="abs" style="left:173px;top:535px;width:317px;height:4px;background:#4a79b0"></div>
<div class="abs" style="left:18px;top:18px;width:40px;height:160px;background:#4a79b0;border-radius:5px;overflow:hidden"><div class="abs" style="left:0;top:80px;width:40px;height:40px;background:#9bbfee"></div>
<svg class="abs" style="left:6px;top:4px" width="28" height="32" viewBox="0 0 28 32"><path d="M3 3.5 Q3 2.5 4 2.5 L18.5 2.5 L25 9 L25 28 Q25 29 24 29 L4 29 Q3 29 3 28 Z" fill="#a8c8f0" stroke="#2b3b52" stroke-width="1.4" stroke-linejoin="round"/><path d="M18.5 2.5 L18.5 9 L25 9 Z" fill="#dbe9fb" stroke="#2b3b52" stroke-width="1" stroke-linejoin="round"/></svg>
<svg class="abs" style="left:4px;top:41px" width="34" height="38" viewBox="0 0 34 38"><use href="#i-select"/></svg>
<svg class="abs" style="left:3px;top:83px" width="34" height="34" viewBox="0 0 34 34"><use href="#i-addmol"/></svg>
<svg class="abs" style="left:4px;top:124px" width="34" height="34" viewBox="0 0 34 34"><use href="#i-eraser"/></svg>
</div>
<div class="abs" style="left:283px;top:490px;width:160px;height:40px;background:#4c7db5;border-radius:5px">
<svg class="abs" style="left:4px;top:5px" width="31" height="31" viewBox="0 0 31 31"><use href="#i-brk" stroke="#8db7ea"/><use href="#i-mag" transform="translate(3,3)"/></svg>
<svg class="abs" style="left:44px;top:5px" width="31" height="31" viewBox="0 0 31 31"><use href="#i-brk" stroke="#8db7ea"/><g transform="translate(4.5,2.5) scale(0.62)"><use href="#i-hexmol"/></g></svg>
<svg class="abs" style="left:88px;top:9px" width="24" height="24" viewBox="0 0 24 24"><use href="#i-save"/></svg>
<svg class="abs" style="left:124px;top:6px" width="32" height="30" viewBox="0 0 32 30"><path d="M7.4 9.8 A 10.8 10.8 0 1 1 7.8 19.6" fill="none" stroke="#1e3048" stroke-width="4.6"/><path d="M7.4 9.8 A 10.8 10.8 0 1 1 7.8 19.6" fill="none" stroke="#8db7ea" stroke-width="2.4"/><path d="M2 9.6 L10.6 11.6 L6.2 17.4 Z" fill="#8db7ea" stroke="#1e3048" stroke-width="1.1" stroke-linejoin="round"/></svg>
</div></div>
<div class="abs" style="left:0;top:619.7px;width:763px;height:1.3px;background:#465e7e"></div>
<div class="abs tab" style="left:-1px;top:621px;width:75px;height:27px;background:#47607f;color:#8b9db5"><span style="left:7px">Inspector</span></div>
<div class="abs tab" style="left:76px;top:621px;width:147px;height:27px;background:#5b7596;color:#fff"><span style="left:6.5px">Interaction Designer</span></div>
<div class="title" style="top:658px;height:39px"><div class="t" style="left:51.5px;top:11.5px;font-size:15px;letter-spacing:-0.3px" id="t-assets">Assets - Home</div>
<svg class="abs" style="left:8px;top:8px" width="28" height="26" viewBox="0 0 28 26"><path d="M1.5 3 H5 V22 H1.5 Z" fill="#7f9fc6" stroke="#2b3b52" stroke-width="1"/><path d="M4.5 2 H9 V23 H4.5 Z" fill="#8fb0d8" stroke="#2b3b52" stroke-width="1"/><path d="M8 1 H21 L26 6 V24 H8 Z" fill="#a8c8f0" stroke="#2b3b52" stroke-width="1.2"/><path d="M21 1 V6 H26 Z" fill="#e6f0fc" stroke="#2b3b52" stroke-width="0.8"/></svg>
<svg class="abs" style="left:661px;top:9px" width="92" height="22" viewBox="0 0 92 22">
<g fill="#6a9bd4" stroke="#2f425e" stroke-width="0.8"><path d="M1.5 10.5 L10.5 9 L10.5 4.5 L13 6 L18 6 L18 4.5 L20.5 4.5 L20.5 16.5 L18 16.5 L18 15 L13 15 L10.5 16.5 L10.5 12 Z"/>
<rect x="26.5" y="15.6" width="16" height="2.4"/></g>
<rect x="50.7" y="3" width="14.6" height="14.6" fill="none" stroke="#2f425e" stroke-width="3.6"/>
<rect x="50.7" y="3" width="14.6" height="14.6" fill="none" stroke="#6a9bd4" stroke-width="1.9"/>
<path d="M74 2.5 L89 17.5 M89 2.5 L74 17.5" stroke="#2f425e" stroke-width="3.4" fill="none"/>
<path d="M74 2.5 L89 17.5 M89 2.5 L74 17.5" stroke="#6a9bd4" stroke-width="2" fill="none"/>
</svg></div>
<svg class="abs" style="left:13px;top:705px" width="92" height="26" viewBox="0 0 92 26">
<g stroke="#1d2838" stroke-width="1.2" stroke-linejoin="round">
<path d="M2 12 L12.5 4 L12.5 9 L23.5 9 L23.5 15 L12.5 15 L12.5 20 Z" fill="#e4e6ee"/>
<path d="M55 12 L44.5 4 L44.5 9 L33.5 9 L33.5 15 L44.5 15 L44.5 20 Z" fill="#c5dcf8"/>
<path d="M65.5 13 L77.5 2 L89.5 13 L86 13 L86 23.5 L80 23.5 L80 16.5 L75 16.5 L75 23.5 L69 23.5 L69 13 Z" fill="#c5dcf8"/>
</g></svg>
<div class="abs" style="left:119px;top:701px;width:637px;height:32px;background:#fff"><span class="abs" style="left:7.8px;top:8.5px;font-size:13.9px;color:#7d7d7d;white-space:nowrap">Filter assets... (Shift+A)</span><svg class="abs" style="left:606px;top:4px" width="26" height="26" viewBox="0 0 26 26"><path d="M14 14 L21.5 21.5" stroke="#6f7780" stroke-width="4.6" stroke-linecap="round"/><path d="M14 14 L21.5 21.5" stroke="#e4e8ee" stroke-width="2.4" stroke-linecap="round"/><circle cx="10" cy="10" r="7.6" fill="#7fa6dc" stroke="#9a9fa6" stroke-width="1.6"/><circle cx="8.8" cy="8" r="4" fill="#a9c6ee" opacity=".8"/></svg></div>
<div class="abs" style="left:0;top:740px;width:763px;height:255px;overflow:hidden">
<div class="abs" style="left:84.75px;top:0;width:1px;height:255px;background:#2a384d"></div>
<div class="abs" style="left:162.25px;top:0;width:1px;height:255px;background:#2a384d"></div>
<div class="abs" style="left:239.75px;top:0;width:1px;height:255px;background:#2a384d"></div>
<div class="abs" style="left:317.25px;top:0;width:1px;height:255px;background:#2a384d"></div>
<div class="abs" style="left:394.75px;top:0;width:1px;height:255px;background:#2a384d"></div>
<div class="abs" style="left:472.25px;top:0;width:1px;height:255px;background:#2a384d"></div>
<div class="abs" style="left:549.75px;top:0;width:1px;height:255px;background:#2a384d"></div>
<div class="abs" style="left:627.25px;top:0;width:1px;height:255px;background:#2a384d"></div>
<div class="abs" style="left:704.75px;top:0;width:1px;height:255px;background:#2a384d"></div>
<svg class="abs" style="left:20.00px;top:9.00px" width="53" height="41" viewBox="0 0 53 41"><path d="M3 4.5 Q3 3 4.5 3 L24.5 3 Q26 3 26 4.5 L26 8 L48.5 8 Q50 8 50 9.5 L50 36.5 Q50 38 48.5 38 L4.5 38 Q3 38 3 36.5 Z" fill="#a8c8f0" stroke="#0c0f14" stroke-width="2"/></svg>
<div class="lbl" style="left:-3.50px;top:60.70px">Alcohols</div>
<svg class="abs" style="left:97.50px;top:9.00px" width="53" height="41" viewBox="0 0 53 41"><path d="M3 4.5 Q3 3 4.5 3 L24.5 3 Q26 3 26 4.5 L26 8 L48.5 8 Q50 8 50 9.5 L50 36.5 Q50 38 48.5 38 L4.5 38 Q3 38 3 36.5 Z" fill="#a8c8f0" stroke="#0c0f14" stroke-width="2"/></svg>
<div class="lbl" style="left:74.00px;top:60.70px">Aldehydes</div>
<svg class="abs" style="left:175.00px;top:9.00px" width="53" height="41" viewBox="0 0 53 41"><path d="M3 4.5 Q3 3 4.5 3 L24.5 3 Q26 3 26 4.5 L26 8 L48.5 8 Q50 8 50 9.5 L50 36.5 Q50 38 48.5 38 L4.5 38 Q3 38 3 36.5 Z" fill="#a8c8f0" stroke="#0c0f14" stroke-width="2"/></svg>
<div class="lbl" style="left:151.50px;top:60.70px">Alkanes</div>
<svg class="abs" style="left:252.50px;top:9.00px" width="53" height="41" viewBox="0 0 53 41"><path d="M3 4.5 Q3 3 4.5 3 L24.5 3 Q26 3 26 4.5 L26 8 L48.5 8 Q50 8 50 9.5 L50 36.5 Q50 38 48.5 38 L4.5 38 Q3 38 3 36.5 Z" fill="#a8c8f0" stroke="#0c0f14" stroke-width="2"/></svg>
<div class="lbl" style="left:229.00px;top:60.70px">Alkenes</div>
<svg class="abs" style="left:330.00px;top:9.00px" width="53" height="41" viewBox="0 0 53 41"><path d="M3 4.5 Q3 3 4.5 3 L24.5 3 Q26 3 26 4.5 L26 8 L48.5 8 Q50 8 50 9.5 L50 36.5 Q50 38 48.5 38 L4.5 38 Q3 38 3 36.5 Z" fill="#a8c8f0" stroke="#0c0f14" stroke-width="2"/></svg>
<div class="lbl" style="left:306.50px;top:60.70px">Alkynes</div>
<svg class="abs" style="left:407.50px;top:9.00px" width="53" height="41" viewBox="0 0 53 41"><path d="M3 4.5 Q3 3 4.5 3 L24.5 3 Q26 3 26 4.5 L26 8 L48.5 8 Q50 8 50 9.5 L50 36.5 Q50 38 48.5 38 L4.5 38 Q3 38 3 36.5 Z" fill="#a8c8f0" stroke="#0c0f14" stroke-width="2"/></svg>
<div class="lbl" style="left:384.00px;top:60.70px">Amides</div>
<svg class="abs" style="left:485.00px;top:9.00px" width="53" height="41" viewBox="0 0 53 41"><path d="M3 4.5 Q3 3 4.5 3 L24.5 3 Q26 3 26 4.5 L26 8 L48.5 8 Q50 8 50 9.5 L50 36.5 Q50 38 48.5 38 L4.5 38 Q3 38 3 36.5 Z" fill="#a8c8f0" stroke="#0c0f14" stroke-width="2"/></svg>
<div class="lbl" style="left:461.50px;top:60.70px">Amines</div>
<svg class="abs" style="left:562.50px;top:9.00px" width="53" height="41" viewBox="0 0 53 41"><path d="M3 4.5 Q3 3 4.5 3 L24.5 3 Q26 3 26 4.5 L26 8 L48.5 8 Q50 8 50 9.5 L50 36.5 Q50 38 48.5 38 L4.5 38 Q3 38 3 36.5 Z" fill="#a8c8f0" stroke="#0c0f14" stroke-width="2"/></svg>
<div class="lbl" style="left:539.00px;top:60.70px">Amino a...</div>
<svg class="abs" style="left:640.00px;top:9.00px" width="53" height="41" viewBox="0 0 53 41"><path d="M3 4.5 Q3 3 4.5 3 L24.5 3 Q26 3 26 4.5 L26 8 L48.5 8 Q50 8 50 9.5 L50 36.5 Q50 38 48.5 38 L4.5 38 Q3 38 3 36.5 Z" fill="#a8c8f0" stroke="#0c0f14" stroke-width="2"/></svg>
<div class="lbl" style="left:616.50px;top:60.70px">Aromatics</div>
<svg class="abs" style="left:20.00px;top:86.50px" width="53" height="41" viewBox="0 0 53 41"><path d="M3 4.5 Q3 3 4.5 3 L24.5 3 Q26 3 26 4.5 L26 8 L48.5 8 Q50 8 50 9.5 L50 36.5 Q50 38 48.5 38 L4.5 38 Q3 38 3 36.5 Z" fill="#a8c8f0" stroke="#0c0f14" stroke-width="2"/></svg>
<div class="lbl" style="left:-3.50px;top:138.20px">Atoms</div>
<svg class="abs" style="left:97.50px;top:86.50px" width="53" height="41" viewBox="0 0 53 41"><path d="M3 4.5 Q3 3 4.5 3 L24.5 3 Q26 3 26 4.5 L26 8 L48.5 8 Q50 8 50 9.5 L50 36.5 Q50 38 48.5 38 L4.5 38 Q3 38 3 36.5 Z" fill="#a8c8f0" stroke="#0c0f14" stroke-width="2"/></svg>
<div class="lbl" style="left:74.00px;top:138.20px">Carbami...</div>
<svg class="abs" style="left:175.00px;top:86.50px" width="53" height="41" viewBox="0 0 53 41"><path d="M3 4.5 Q3 3 4.5 3 L24.5 3 Q26 3 26 4.5 L26 8 L48.5 8 Q50 8 50 9.5 L50 36.5 Q50 38 48.5 38 L4.5 38 Q3 38 3 36.5 Z" fill="#a8c8f0" stroke="#0c0f14" stroke-width="2"/></svg>
<div class="lbl" style="left:151.50px;top:138.20px">Carbohy...</div>
<svg class="abs" style="left:252.50px;top:86.50px" width="53" height="41" viewBox="0 0 53 41"><path d="M3 4.5 Q3 3 4.5 3 L24.5 3 Q26 3 26 4.5 L26 8 L48.5 8 Q50 8 50 9.5 L50 36.5 Q50 38 48.5 38 L4.5 38 Q3 38 3 36.5 Z" fill="#a8c8f0" stroke="#0c0f14" stroke-width="2"/></svg>
<div class="lbl" style="left:229.00px;top:138.20px">Carboxyl...</div>
<svg class="abs" style="left:330.00px;top:86.50px" width="53" height="41" viewBox="0 0 53 41"><path d="M3 4.5 Q3 3 4.5 3 L24.5 3 Q26 3 26 4.5 L26 8 L48.5 8 Q50 8 50 9.5 L50 36.5 Q50 38 48.5 38 L4.5 38 Q3 38 3 36.5 Z" fill="#a8c8f0" stroke="#0c0f14" stroke-width="2"/></svg>
<div class="lbl" style="left:306.50px;top:138.20px">Coordin...</div>
<svg class="abs" style="left:407.50px;top:86.50px" width="53" height="41" viewBox="0 0 53 41"><path d="M3 4.5 Q3 3 4.5 3 L24.5 3 Q26 3 26 4.5 L26 8 L48.5 8 Q50 8 50 9.5 L50 36.5 Q50 38 48.5 38 L4.5 38 Q3 38 3 36.5 Z" fill="#a8c8f0" stroke="#0c0f14" stroke-width="2"/></svg>
<div class="lbl" style="left:384.00px;top:138.20px">Cyclic al...</div>
<svg class="abs" style="left:485.00px;top:86.50px" width="53" height="41" viewBox="0 0 53 41"><path d="M3 4.5 Q3 3 4.5 3 L24.5 3 Q26 3 26 4.5 L26 8 L48.5 8 Q50 8 50 9.5 L50 36.5 Q50 38 48.5 38 L4.5 38 Q3 38 3 36.5 Z" fill="#a8c8f0" stroke="#0c0f14" stroke-width="2"/></svg>
<div class="lbl" style="left:461.50px;top:138.20px">Cyclic al...</div>
<svg class="abs" style="left:562.50px;top:86.50px" width="53" height="41" viewBox="0 0 53 41"><path d="M3 4.5 Q3 3 4.5 3 L24.5 3 Q26 3 26 4.5 L26 8 L48.5 8 Q50 8 50 9.5 L50 36.5 Q50 38 48.5 38 L4.5 38 Q3 38 3 36.5 Z" fill="#a8c8f0" stroke="#0c0f14" stroke-width="2"/></svg>
<div class="lbl" style="left:539.00px;top:138.20px">Deoxyrib...</div>
<svg class="abs" style="left:640.00px;top:86.50px" width="53" height="41" viewBox="0 0 53 41"><path d="M3 4.5 Q3 3 4.5 3 L24.5 3 Q26 3 26 4.5 L26 8 L48.5 8 Q50 8 50 9.5 L50 36.5 Q50 38 48.5 38 L4.5 38 Q3 38 3 36.5 Z" fill="#a8c8f0" stroke="#0c0f14" stroke-width="2"/></svg>
<div class="lbl" style="left:616.50px;top:138.20px">Ethers</div>
<svg class="abs" style="left:20.00px;top:164.00px" width="53" height="41" viewBox="0 0 53 41"><path d="M3 4.5 Q3 3 4.5 3 L24.5 3 Q26 3 26 4.5 L26 8 L48.5 8 Q50 8 50 9.5 L50 36.5 Q50 38 48.5 38 L4.5 38 Q3 38 3 36.5 Z" fill="#a8c8f0" stroke="#0c0f14" stroke-width="2"/></svg>
<div class="lbl" style="left:-3.50px;top:215.70px">Fatty acids</div>
<svg class="abs" style="left:97.50px;top:164.00px" width="53" height="41" viewBox="0 0 53 41"><path d="M3 4.5 Q3 3 4.5 3 L24.5 3 Q26 3 26 4.5 L26 8 L48.5 8 Q50 8 50 9.5 L50 36.5 Q50 38 48.5 38 L4.5 38 Q3 38 3 36.5 Z" fill="#a8c8f0" stroke="#0c0f14" stroke-width="2"/></svg>
<div class="lbl" style="left:74.00px;top:215.70px">Fullerenes</div>
<svg class="abs" style="left:175.00px;top:164.00px" width="53" height="41" viewBox="0 0 53 41"><path d="M3 4.5 Q3 3 4.5 3 L24.5 3 Q26 3 26 4.5 L26 8 L48.5 8 Q50 8 50 9.5 L50 36.5 Q50 38 48.5 38 L4.5 38 Q3 38 3 36.5 Z" fill="#a8c8f0" stroke="#0c0f14" stroke-width="2"/></svg>
<div class="lbl" style="left:151.50px;top:215.70px">Glycans</div>
<svg class="abs" style="left:252.50px;top:164.00px" width="53" height="41" viewBox="0 0 53 41"><path d="M3 4.5 Q3 3 4.5 3 L24.5 3 Q26 3 26 4.5 L26 8 L48.5 8 Q50 8 50 9.5 L50 36.5 Q50 38 48.5 38 L4.5 38 Q3 38 3 36.5 Z" fill="#a8c8f0" stroke="#0c0f14" stroke-width="2"/></svg>
<div class="lbl" style="left:229.00px;top:215.70px">Heteroar...</div>
<svg class="abs" style="left:330.00px;top:164.00px" width="53" height="41" viewBox="0 0 53 41"><path d="M3 4.5 Q3 3 4.5 3 L24.5 3 Q26 3 26 4.5 L26 8 L48.5 8 Q50 8 50 9.5 L50 36.5 Q50 38 48.5 38 L4.5 38 Q3 38 3 36.5 Z" fill="#a8c8f0" stroke="#0c0f14" stroke-width="2"/></svg>
<div class="lbl" style="left:306.50px;top:215.70px">Ketones</div>
<svg class="abs" style="left:407.50px;top:164.00px" width="53" height="41" viewBox="0 0 53 41"><path d="M3 4.5 Q3 3 4.5 3 L24.5 3 Q26 3 26 4.5 L26 8 L48.5 8 Q50 8 50 9.5 L50 36.5 Q50 38 48.5 38 L4.5 38 Q3 38 3 36.5 Z" fill="#a8c8f0" stroke="#0c0f14" stroke-width="2"/></svg>
<div class="lbl" style="left:384.00px;top:215.70px">Lennard...</div>
<svg class="abs" style="left:485.00px;top:164.00px" width="53" height="41" viewBox="0 0 53 41"><path d="M3 4.5 Q3 3 4.5 3 L24.5 3 Q26 3 26 4.5 L26 8 L48.5 8 Q50 8 50 9.5 L50 36.5 Q50 38 48.5 38 L4.5 38 Q3 38 3 36.5 Z" fill="#a8c8f0" stroke="#0c0f14" stroke-width="2"/></svg>
<div class="lbl" style="left:461.50px;top:215.70px">Macrocy...</div>
<svg class="abs" style="left:562.50px;top:164.00px" width="53" height="41" viewBox="0 0 53 41"><path d="M3 4.5 Q3 3 4.5 3 L24.5 3 Q26 3 26 4.5 L26 8 L48.5 8 Q50 8 50 9.5 L50 36.5 Q50 38 48.5 38 L4.5 38 Q3 38 3 36.5 Z" fill="#a8c8f0" stroke="#0c0f14" stroke-width="2"/></svg>
<div class="lbl" style="left:539.00px;top:215.70px">Nanopar...</div>
<svg class="abs" style="left:640.00px;top:164.00px" width="53" height="41" viewBox="0 0 53 41"><path d="M3 4.5 Q3 3 4.5 3 L24.5 3 Q26 3 26 4.5 L26 8 L48.5 8 Q50 8 50 9.5 L50 36.5 Q50 38 48.5 38 L4.5 38 Q3 38 3 36.5 Z" fill="#a8c8f0" stroke="#0c0f14" stroke-width="2"/></svg>
<div class="lbl" style="left:616.50px;top:215.70px">Nitriles</div>
<svg class="abs" style="left:20.00px;top:241.50px" width="53" height="41" viewBox="0 0 53 41"><path d="M3 4.5 Q3 3 4.5 3 L24.5 3 Q26 3 26 4.5 L26 8 L48.5 8 Q50 8 50 9.5 L50 36.5 Q50 38 48.5 38 L4.5 38 Q3 38 3 36.5 Z" fill="#a8c8f0" stroke="#0c0f14" stroke-width="2"/></svg>
<svg class="abs" style="left:97.50px;top:241.50px" width="53" height="41" viewBox="0 0 53 41"><path d="M3 4.5 Q3 3 4.5 3 L24.5 3 Q26 3 26 4.5 L26 8 L48.5 8 Q50 8 50 9.5 L50 36.5 Q50 38 48.5 38 L4.5 38 Q3 38 3 36.5 Z" fill="#a8c8f0" stroke="#0c0f14" stroke-width="2"/></svg>
<svg class="abs" style="left:175.00px;top:241.50px" width="53" height="41" viewBox="0 0 53 41"><path d="M3 4.5 Q3 3 4.5 3 L24.5 3 Q26 3 26 4.5 L26 8 L48.5 8 Q50 8 50 9.5 L50 36.5 Q50 38 48.5 38 L4.5 38 Q3 38 3 36.5 Z" fill="#a8c8f0" stroke="#0c0f14" stroke-width="2"/></svg>
<svg class="abs" style="left:252.50px;top:241.50px" width="53" height="41" viewBox="0 0 53 41"><path d="M3 4.5 Q3 3 4.5 3 L24.5 3 Q26 3 26 4.5 L26 8 L48.5 8 Q50 8 50 9.5 L50 36.5 Q50 38 48.5 38 L4.5 38 Q3 38 3 36.5 Z" fill="#a8c8f0" stroke="#0c0f14" stroke-width="2"/></svg>
<svg class="abs" style="left:330.00px;top:241.50px" width="53" height="41" viewBox="0 0 53 41"><path d="M3 4.5 Q3 3 4.5 3 L24.5 3 Q26 3 26 4.5 L26 8 L48.5 8 Q50 8 50 9.5 L50 36.5 Q50 38 48.5 38 L4.5 38 Q3 38 3 36.5 Z" fill="#a8c8f0" stroke="#0c0f14" stroke-width="2"/></svg>
<svg class="abs" style="left:407.50px;top:241.50px" width="53" height="41" viewBox="0 0 53 41"><path d="M3 4.5 Q3 3 4.5 3 L24.5 3 Q26 3 26 4.5 L26 8 L48.5 8 Q50 8 50 9.5 L50 36.5 Q50 38 48.5 38 L4.5 38 Q3 38 3 36.5 Z" fill="#a8c8f0" stroke="#0c0f14" stroke-width="2"/></svg>
<svg class="abs" style="left:485.00px;top:241.50px" width="53" height="41" viewBox="0 0 53 41"><path d="M3 4.5 Q3 3 4.5 3 L24.5 3 Q26 3 26 4.5 L26 8 L48.5 8 Q50 8 50 9.5 L50 36.5 Q50 38 48.5 38 L4.5 38 Q3 38 3 36.5 Z" fill="#a8c8f0" stroke="#0c0f14" stroke-width="2"/></svg>
</div>
<div class="abs" style="left:748px;top:746px;width:5px;height:196px;background:#4c78ac"></div>
<div class="abs" style="left:563px;top:976px;width:53px;height:19px;background:#fff"></div>
<div class="el" style="left:14.0px;top:1008px">H</div>
<div class="el" style="left:53.9px;top:1008px">C</div>
<div class="el" style="left:93.8px;top:1008px">N</div>
<div class="el" style="left:133.7px;top:1008px">O</div>
<svg class="abs" style="left:172px;top:1007px" width="28" height="27" viewBox="0 0 28 27">
<path d="M1 6 L3.5 6 L3.5 3 L13 3 L13 9 L17 9 L17 7 L21 7 L21 5.5 L27 5.5 L27 18 L1 18 Z" fill="#e9edf2" stroke="#222c3a" stroke-width="1"/>
<rect x="4" y="20" width="20.5" height="5.5" fill="#e9edf2" stroke="#222c3a" stroke-width="1"/>
<g stroke="#9aa4b2" stroke-width="0.6"><path d="M1.5 10 H26.5 M1.5 12.6 H26.5 M1.5 15.2 H26.5 M4.5 22.7 H24"/></g>
<rect x="5" y="1" width="8.5" height="8.5" fill="#fff" stroke="#222c3a" stroke-width="1"/><text x="9.25" y="8.3" font-size="8" font-weight="bold" text-anchor="middle" fill="#111" font-family="Liberation Sans">H</text></svg>
<svg class="abs" style="left:212px;top:1007px" width="28" height="26" viewBox="0 0 28 26"><path d="M2.3 13 L8 3 L20 3 L25.7 13 L20 23 L8 23 Z" fill="none" stroke="#222c3a" stroke-width="4"/><path d="M2.3 13 L8 3 L20 3 L25.7 13 L20 23 L8 23 Z" fill="none" stroke="#f0f4f8" stroke-width="2.2"/></svg>
<svg class="abs" style="left:252px;top:1006px" width="28" height="28" viewBox="-14 -14 28 28"><g fill="#eef1f5" stroke="#222c3a" stroke-width="0.6"><circle r="9.4"/><g id="gt2"><rect x="-2.6" y="-13" width="5.2" height="26" rx="1"/></g><use href="#gt2" transform="rotate(45)"/><use href="#gt2" transform="rotate(90)"/><use href="#gt2" transform="rotate(135)"/></g><circle r="9" fill="#eef1f5"/><circle r="6" fill="#6a95cc"/><circle r="4.4" fill="#eef1f5"/><circle r="2.6" fill="#2e3d53"/></svg>
<svg class="abs" style="left:607px;top:1008px" width="28" height="28" viewBox="0 0 28 28"><path d="M13 13 L22 22" stroke="#222c3a" stroke-width="5" stroke-linecap="round"/><path d="M13 13 L22 22" stroke="#e9edf2" stroke-width="2.6" stroke-linecap="round"/><circle cx="10.5" cy="10.5" r="7.6" fill="#a8c8f0" stroke="#e9edf2" stroke-width="2"/><circle cx="10.5" cy="10.5" r="9" fill="none" stroke="#222c3a" stroke-width="0.8"/><path d="M6.5 10.5 H14.5 M10.5 6.5 V14.5" stroke="#fff" stroke-width="2.6"/></svg>
<svg class="abs" style="left:647px;top:1008px" width="28" height="28" viewBox="0 0 28 28"><path d="M13 13 L22 22" stroke="#222c3a" stroke-width="5" stroke-linecap="round"/><path d="M13 13 L22 22" stroke="#e9edf2" stroke-width="2.6" stroke-linecap="round"/><circle cx="10.5" cy="10.5" r="7.6" fill="#a8c8f0" stroke="#e9edf2" stroke-width="2"/><circle cx="10.5" cy="10.5" r="9" fill="none" stroke="#222c3a" stroke-width="0.8"/><path d="M6.5 10.5 H14.5" stroke="#fff" stroke-width="2.6"/></svg>
<svg class="abs" style="left:686px;top:1008px" width="26" height="26" viewBox="0 0 26 26"><rect x="1" y="1" width="24" height="23" fill="#a8c8f0"/><g stroke="#4c78ac" stroke-width="1.6"><path d="M3 5 H23 M3 9.5 H23 M3 14 H23 M3 18.5 H23"/></g><rect x="1" y="22" width="24" height="2.5" fill="#6a95cc"/></svg>
<svg class="abs" style="left:726px;top:1008px" width="26" height="26" viewBox="0 0 26 26"><rect x="1" y="1" width="24" height="24" fill="#6a95cc"/><g fill="#a8c8f0" stroke="#35506f" stroke-width="1"><circle cx="9" cy="8.5" r="4.2"/><circle cx="17.5" cy="11" r="4.2"/><circle cx="9.5" cy="17" r="4.4"/></g></svg>
</div>
</body></html>
